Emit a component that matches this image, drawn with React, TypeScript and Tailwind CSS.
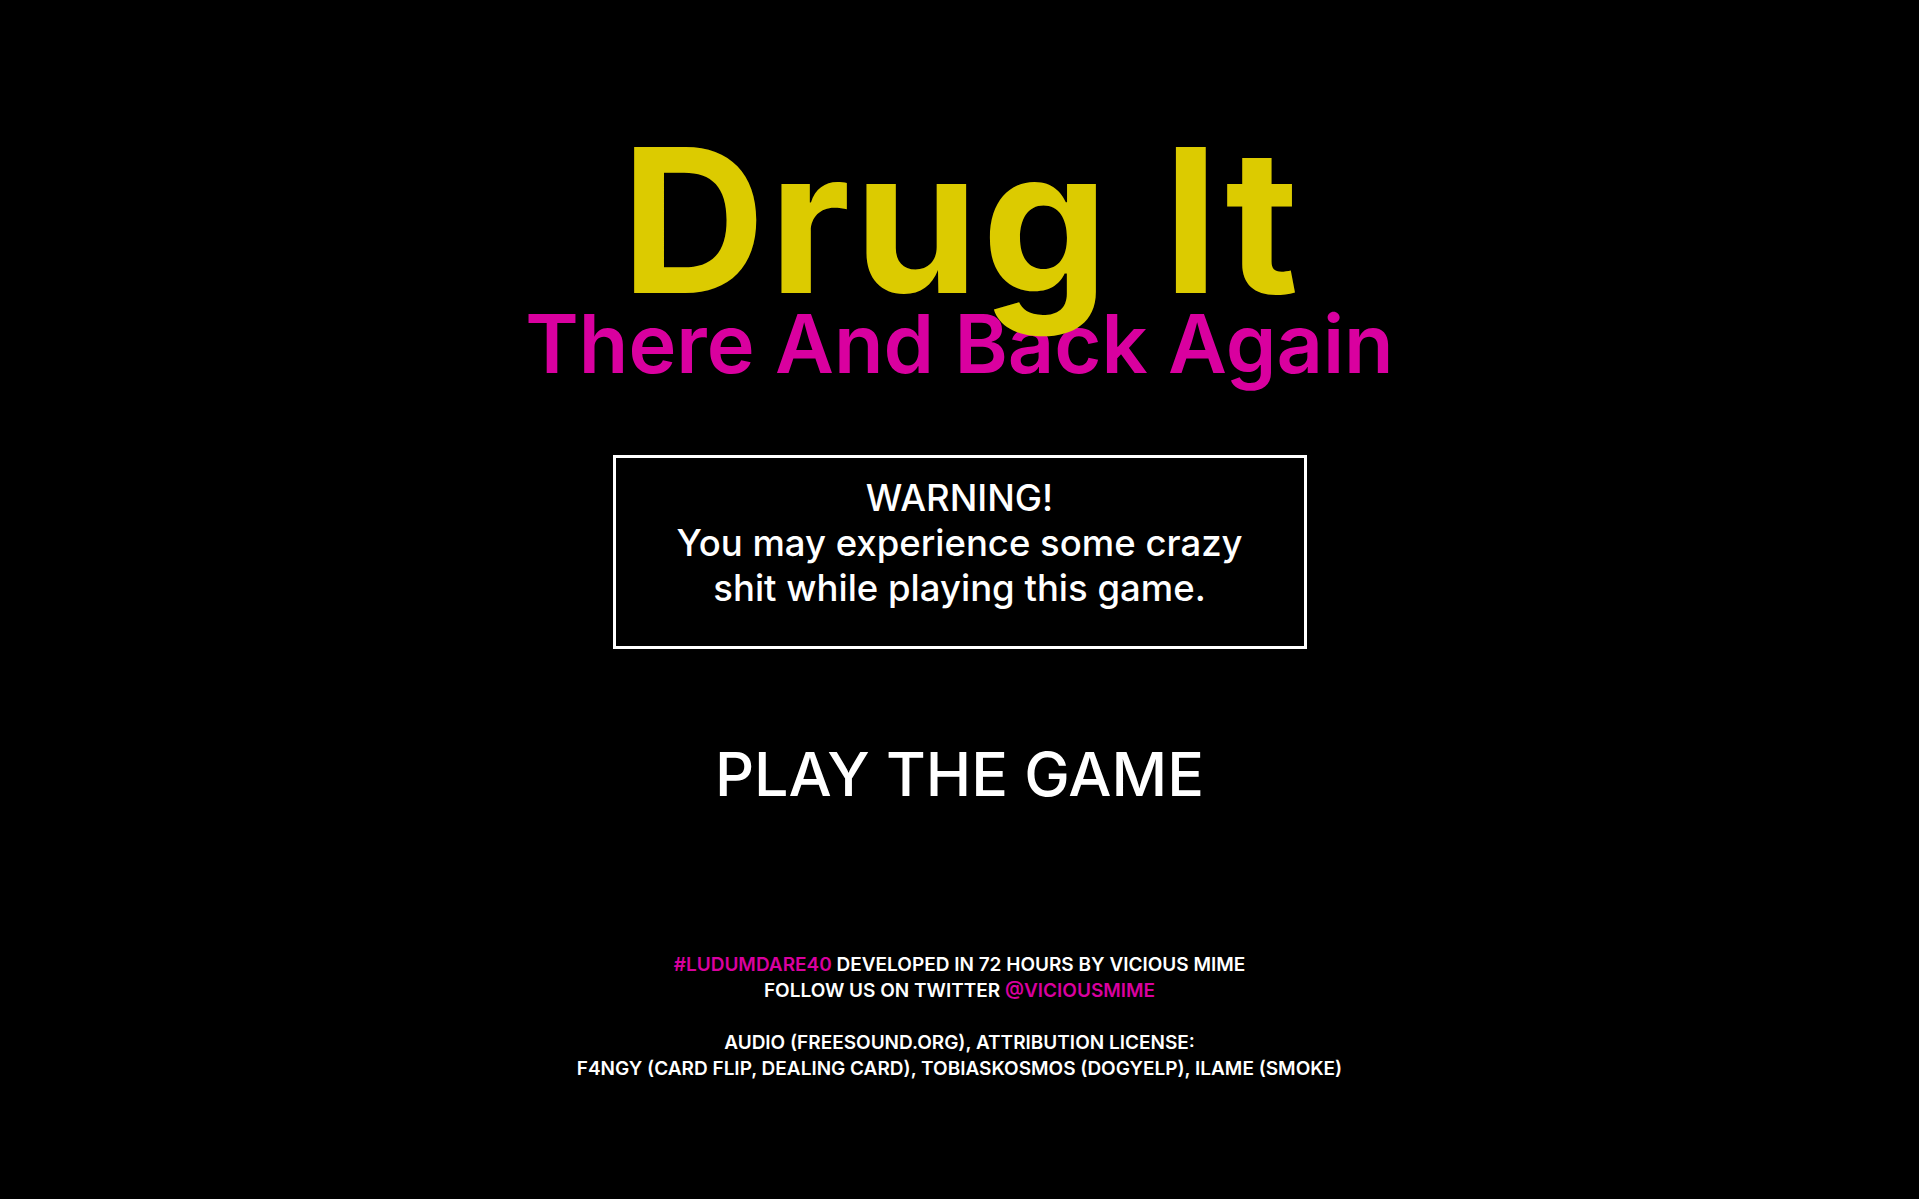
export default function App() {
  return (
    <div
      className="min-h-screen w-full bg-black flex flex-col items-center text-white"
      style={{ fontFamily: 'Inter, "Noto Sans", sans-serif' }}
    >
      <h1 className="relative z-10 pt-[120px] pl-[4px] text-[200px] leading-none font-bold tracking-[3.5px] text-[#dccb00]">
        Drug It
      </h1>
      <h2 className="-mt-[16px] text-[81px] leading-none font-semibold text-[#d9009f]">
        There And Back Again
      </h2>

      <div className="mt-[70px] w-[694px] border-[3px] border-white pt-[18px] pb-[35px] text-center text-[36.5px] leading-[45px] font-medium">
        WARNING!
        <br />
        You may experience some crazy
        <br />
        shit while playing this game.
      </div>

      <button className="mt-[95px] text-[61px] leading-none font-medium text-white">
        PLAY THE GAME
      </button>

      <div className="mt-[147px] text-center text-[19px] leading-[26px] font-semibold uppercase">
        <div>
          <span className="text-[#d9009f]">#LUDUMDARE40</span> DEVELOPED IN 72 HOURS BY VICIOUS MIME
        </div>
        <div>
          FOLLOW US ON TWITTER <span className="text-[#d9009f]">@VICIOUSMIME</span>
        </div>
        <div className="h-[26px]" />
        <div>AUDIO (FREESOUND.ORG), ATTRIBUTION LICENSE:</div>
        <div>F4NGY (CARD FLIP, DEALING CARD), TOBIASKOSMOS (DOGYELP), ILAME (SMOKE)</div>
      </div>
    </div>
  );
}
